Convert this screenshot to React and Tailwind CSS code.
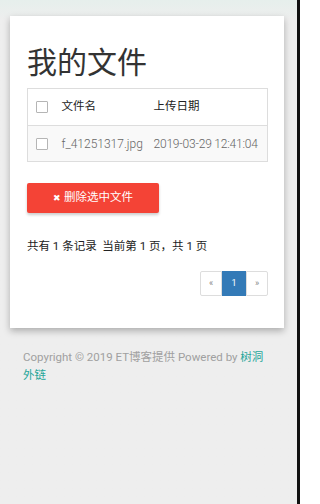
import React from "react";

function Box() {
  return <span className="block w-[12px] h-[12px] border border-[#b5b5b5] bg-white rounded-[1px]" />;
}

export default function App() {
  const font = { fontFamily: 'Roboto, "Noto Sans CJK SC", sans-serif' };
  return (
    <div className="w-[300px] h-[504px] bg-[#eeeeee] flex overflow-hidden" style={font}>
      <div className="flex-1 flex flex-col bg-gradient-to-b from-[#e6efec] from-0% to-[#eeeeee] to-[4%]">
        <div className="mt-[16px] ml-[10px] mr-[13px] bg-white shadow-[0_3px_7px_rgba(0,0,0,0.28)] pt-[29px] pb-[32px] pl-[17px] pr-[16px]">
          <h3 className="text-[30px] leading-[36px] text-[#333] font-normal">我的文件</h3>
          <table className="mt-[7px] w-full border border-[#dddddd] border-collapse text-[11.5px]">
            <thead>
              <tr className="h-[37px]">
                <th className="pl-[8px] w-[34px] text-left align-middle font-normal"><Box /></th>
                <th className="w-[92px] text-left font-normal text-[#222]">文件名</th>
                <th className="text-left font-normal text-[#222]">上传日期</th>
              </tr>
            </thead>
            <tbody>
              <tr className="h-[36px] bg-[#f9f9f9] border-t border-[#dddddd]">
                <td className="pl-[8px] align-middle"><Box /></td>
                <td className="text-[#666] font-light text-[12px] whitespace-nowrap">f_41251317.jpg</td>
                <td className="text-[#666] font-light text-[12px] whitespace-nowrap tracking-[-0.2px]">2019-03-29 12:41:04</td>
              </tr>
            </tbody>
          </table>
          <button className="mt-[21px] w-[132px] h-[30px] bg-[#f44336] text-white text-[11.5px] rounded-[2px] shadow-[0_2px_3px_rgba(0,0,0,0.2)] flex items-center justify-center gap-[3px]">
            <span className="text-[9px] leading-none">✖</span>
            <span>删除选中文件</span>
          </button>
          <p className="mt-[23px] text-[11.5px] leading-[20px] text-[#222]">共有 1 条记录&nbsp; 当前第 1 页，共 1 页</p>
          <div className="mt-[15px] flex justify-end">
            <div className="flex h-[25px] text-[9px]">
              <span className="w-[22px] flex items-center justify-center border border-[#dddddd] text-[#888] rounded-l-[2px]">«</span>
              <span className="w-[24px] flex items-center justify-center bg-[#337ab7] text-white">1</span>
              <span className="w-[22px] flex items-center justify-center border border-[#dddddd] text-[#888] rounded-r-[2px]">»</span>
            </div>
          </div>
        </div>
        <p className="mt-[20px] ml-[23px] mr-[29px] text-[11.5px] leading-[18px] text-[#a0a0a0]">
          Copyright © 2019 ET博客提供 Powered by <span className="text-[#26a69a]">树洞外链</span>
        </p>
      </div>
      <div className="w-[3px] bg-[#111]" />
    </div>
  );
}
